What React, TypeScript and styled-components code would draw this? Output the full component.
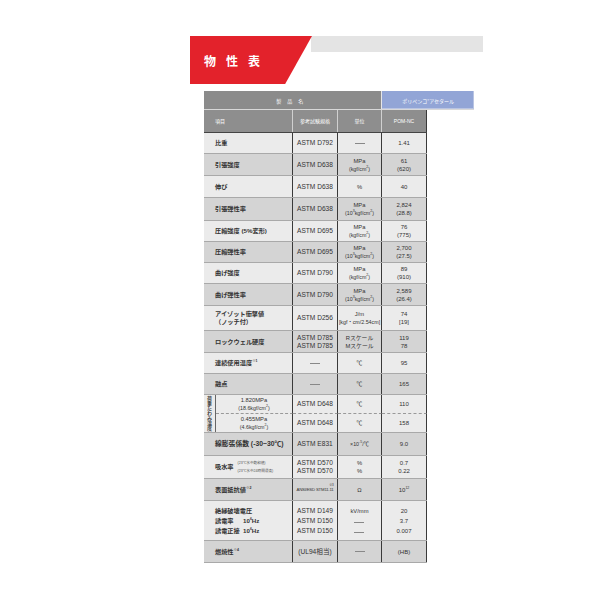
import { FC, ReactNode } from 'react';
import styled, { createGlobalStyle } from 'styled-components';

const GlobalStyle = createGlobalStyle`
  body {
    margin: 0;
    background: #fff;
    font-family: "Liberation Sans", "Noto Sans CJK JP", sans-serif;
  }
`;

const Page = styled.div`
  width: 600px;
  height: 600px;
  padding: 36px 0 0 190px;
  box-sizing: border-box;
`;

const Banner = styled.div`
  display: flex;
  width: 293px;
  height: 48px;
`;

const RedTab = styled.div`
  width: 122px;
  flex-shrink: 0;
  background: #e3222b;
  clip-path: polygon(0 0, 100% 0, 78% 100%, 0 100%);
  display: flex;
  align-items: center;
  padding-left: 14px;
  box-sizing: border-box;
  color: #fff;
  font-family: "Noto Sans CJK JP", sans-serif;
  font-weight: bold;
  font-size: 12px;
  letter-spacing: 10px;
`;

const GrayBar = styled.div`
  flex: 1;
  height: 16px;
  margin-left: -1px;
  background: #e4e4e4;
`;

const Table = styled.div`
  margin: 7px 0 0 14px;
  width: 270px;
  color: #333;
`;

const TopHead = styled.div`
  display: flex;
  height: 18px;
  border-bottom: 1px solid #d8d8d8;
`;

const ProductHead = styled.div`
  width: 178px;
  background: #8b8b8b;
  color: #fff;
  font-family: "Noto Sans CJK JP", sans-serif;
  font-size: 5px;
  letter-spacing: 6px;
  display: flex;
  align-items: center;
  justify-content: center;
`;

const GradeHead = styled.div`
  width: 92px;
  background: #92a5d6;
  border-left: 1px solid #e6e6e6;
  box-shadow: inset -1px -1px 0 #b9c4e2;
  color: #fff;
  font-family: "Noto Sans CJK JP", sans-serif;
  font-size: 5px;
  display: flex;
  align-items: center;
  justify-content: center;
`;

const Row = styled.div<{ $h: number; $shade?: boolean; $head?: boolean }>`
  display: grid;
  grid-template-columns: 89px 45px 44px 45px;
  width: 223px;
  height: ${({ $h }) => $h}px;
  box-sizing: border-box;
  background: ${({ $head, $shade }) => ($head ? '#8e8e8e' : $shade ? '#d4d4d4' : '#ebebeb')};
  color: ${({ $head }) => ($head ? '#fff' : '#333')};
  border-bottom: 1px solid ${({ $head }) => ($head ? '#444' : '#a9a9a9')};
`;

const Cell = styled.div<{ $left?: boolean; $bold?: boolean; $size?: number; $head?: boolean }>`
  display: flex;
  flex-direction: column;
  justify-content: center;
  align-items: ${({ $left }) => ($left ? 'flex-start' : 'center')};
  padding-left: ${({ $left }) => ($left ? '11px' : '0')};
  border-right: 1px solid ${({ $head }) => ($head ? '#d0d0d0' : '#3a3a3a')};
  font-size: ${({ $size }) => $size || 6}px;
  font-weight: ${({ $bold }) => ($bold ? 'bold' : 'normal')};
  line-height: 8px;
  white-space: nowrap;
  text-align: ${({ $left }) => ($left ? 'left' : 'center')};
  &:last-child {
    border-right-color: #3a3a3a;
  }
`;

const Dash = styled.span`
  display: inline-block;
  width: 10px;
  height: 0;
  border-top: 1px solid #888;
`;

const Sup = styled.sup`
  font-size: 3.5px;
  line-height: 0;
  vertical-align: 3px;
`;

const Small = styled.span`
  font-size: 5.3px;
`;

/* 荷重たわみ温度: two sub rows with a side label */
const LoadRow = styled.div`
  display: grid;
  grid-template-columns: 12px 77px 45px 44px 45px;
  grid-template-rows: 1fr 1fr;
  width: 223px;
  height: 38px;
  box-sizing: border-box;
  background: #ebebeb;
  border-bottom: 1px solid #a9a9a9;
`;

const SideLabel = styled.div`
  grid-row: span 2;
  height: 37px;
  writing-mode: vertical-rl;
  text-orientation: upright;
  white-space: nowrap;
  overflow: hidden;
  font-family: "Noto Sans CJK JP", sans-serif;
  font-size: 5px;
  font-weight: bold;
  line-height: 11px;
  text-align: center;
  border-right: 1px solid #666;
  color: #444;
`;

const SubCell = styled(Cell)<{ $top?: boolean }>`
  border-bottom: ${({ $top }) => ($top ? '1px dashed #999' : 'none')};
`;

const LabelWrap = styled.div`
  display: flex;
  align-items: center;
  gap: 4px;
`;

const Notes = styled.div`
  display: flex;
  flex-direction: column;
  font-size: 3.6px;
  font-weight: normal;
  line-height: 8px;
  color: #555;
`;

const Lines = styled.div<{ $left?: boolean }>`
  display: flex;
  flex-direction: column;
  align-items: ${({ $left }) => ($left ? 'flex-start' : 'center')};
  line-height: 10px;
`;

const TagLine = styled.div`
  display: flex;
`;

const TagName = styled.span`
  width: 28px;
`;

const StdNote = styled.span`
  font-size: 4.3px;
  letter-spacing: -0.2px;
  position: relative;
`;

const StdMark = styled.span`
  position: absolute;
  right: 0;
  top: -5px;
  font-size: 3px;
`;

interface Item {
  label: ReactNode;
  std: ReactNode;
  unit: ReactNode;
  value: ReactNode;
  h: number;
  labelSize?: number;
}

const kgf = (
  <Small>
    (kgf/cm<Sup>2</Sup>)
  </Small>
);
const kgf3 = (
  <Small>
    (10<Sup>3</Sup>kgf/cm<Sup>2</Sup>)
  </Small>
);

const upper: Item[] = [
  { label: '比重', std: 'ASTM D792', unit: <Dash />, value: '1.41', h: 21 },
  { label: '引張強度', std: 'ASTM D638', unit: <>MPa{kgf}</>, value: <>61<span>(620)</span></>, h: 22 },
  { label: '伸び', std: 'ASTM D638', unit: '%', value: '40', h: 22 },
  { label: '引張弾性率', std: 'ASTM D638', unit: <>MPa{kgf3}</>, value: <>2,824<span>(28.8)</span></>, h: 23 },
  { label: '圧縮強度 (5%変形)', std: 'ASTM D695', unit: <>MPa{kgf}</>, value: <>76<span>(775)</span></>, h: 21 },
  { label: '圧縮弾性率', std: 'ASTM D695', unit: <>MPa{kgf3}</>, value: <>2,700<span>(27.5)</span></>, h: 21 },
  { label: '曲げ強度', std: 'ASTM D790', unit: <>MPa{kgf}</>, value: <>89<span>(910)</span></>, h: 21 },
  { label: '曲げ弾性率', std: 'ASTM D790', unit: <>MPa{kgf3}</>, value: <>2,589<span>(26.4)</span></>, h: 22 },
  {
    label: <>アイゾット衝撃値<span>（ノッチ付）</span></>,
    std: 'ASTM D256',
    unit: <>J/m<Small>[kgf・cm/2.54cm]</Small></>,
    value: <>74<span>[19]</span></>,
    h: 25,
  },
  {
    label: 'ロックウェル硬度',
    std: <>ASTM D785<span>ASTM D785</span></>,
    unit: <>Rスケール<span>Mスケール</span></>,
    value: <>119<span>78</span></>,
    h: 22,
  },
  { label: <span>連続使用温度<Sup>※1</Sup></span>, std: <Dash />, unit: '℃', value: '95', h: 21 },
  { label: '融点', std: <Dash />, unit: '℃', value: '165', h: 21 },
];

const lower: Item[] = [
  {
    label: '線膨張係数 (-30~30℃)',
    std: 'ASTM E831',
    unit: <Small>×10<Sup>-5</Sup>/℃</Small>,
    value: '9.0',
    h: 23,
    labelSize: 6.8,
  },
  {
    label: (
      <LabelWrap>
        吸水率
        <Notes>
          <span>(23℃水中飽和値)</span>
          <span>(23℃水中24時間浸漬)</span>
        </Notes>
      </LabelWrap>
    ),
    std: <>ASTM D570<span>ASTM D570</span></>,
    unit: <>%<span>%</span></>,
    value: <>0.7<span>0.22</span></>,
    h: 23,
  },
  {
    label: <span>表面抵抗値<Sup>※2</Sup></span>,
    std: (
      <StdNote>
        ANSI/ESD STM11.11<StdMark>※3</StdMark>
      </StdNote>
    ),
    unit: 'Ω',
    value: <span>10<Sup>12</Sup></span>,
    h: 22,
  },
  {
    label: (
      <Lines $left>
        <span>絶縁破壊電圧</span>
        <TagLine>
          <TagName>誘電率</TagName>
          <span>10<Sup>6</Sup>Hz</span>
        </TagLine>
        <TagLine>
          <TagName>誘電正接</TagName>
          <span>10<Sup>6</Sup>Hz</span>
        </TagLine>
      </Lines>
    ),
    std: (
      <Lines>
        <span>ASTM D149</span>
        <span>ASTM D150</span>
        <span>ASTM D150</span>
      </Lines>
    ),
    unit: (
      <Lines>
        <span>kV/mm</span>
        <span><Dash /></span>
        <span><Dash /></span>
      </Lines>
    ),
    value: (
      <Lines>
        <span>20</span>
        <span>3.7</span>
        <span>0.007</span>
      </Lines>
    ),
    h: 40,
  },
  { label: <span>燃焼性<Sup>※4</Sup></span>, std: '(UL94相当)', unit: <Dash />, value: '(HB)', h: 22 },
];

const ItemRow: FC<{ item: Item; shade: boolean }> = ({ item, shade }) => (
  <Row $h={item.h} $shade={shade}>
    <Cell $left $bold $size={item.labelSize || 6.2}>
      {item.label}
    </Cell>
    <Cell $size={6.6}>{item.std}</Cell>
    <Cell $size={5.8}>{item.unit}</Cell>
    <Cell $size={6}>{item.value}</Cell>
  </Row>
);

const App: FC = () => {
  return (
    <Page>
      <GlobalStyle />
      <Banner>
        <RedTab>物性表</RedTab>
        <GrayBar />
      </Banner>
      <Table>
        <TopHead>
          <ProductHead>製品名</ProductHead>
          <GradeHead>ポリペンコ°アセタール</GradeHead>
        </TopHead>
        <Row $h={23} $head>
          <Cell $left $head $size={5}>項目</Cell>
          <Cell $head $size={5}>参考試験規格</Cell>
          <Cell $head $size={5}>単位</Cell>
          <Cell $head $size={5}>POM-NC</Cell>
        </Row>
        {upper.map((item, i) => (
          <ItemRow key={i} item={item} shade={i % 2 === 1} />
        ))}
        <LoadRow>
          <SideLabel>荷重たわみ温度</SideLabel>
          <SubCell $top $size={5.8}>
            1.820MPa
            <Small>(18.6kgf/cm<Sup>2</Sup>)</Small>
          </SubCell>
          <SubCell $top $size={6.6}>ASTM D648</SubCell>
          <SubCell $top $size={5.8}>℃</SubCell>
          <SubCell $top $size={6}>110</SubCell>
          <SubCell $size={5.8}>
            0.455MPa
            <Small>(4.6kgf/cm<Sup>2</Sup>)</Small>
          </SubCell>
          <SubCell $size={6.6}>ASTM D648</SubCell>
          <SubCell $size={5.8}>℃</SubCell>
          <SubCell $size={6}>158</SubCell>
        </LoadRow>
        {lower.map((item, i) => (
          <ItemRow key={i} item={item} shade={i % 2 === 0} />
        ))}
      </Table>
    </Page>
  );
};

export default App;
